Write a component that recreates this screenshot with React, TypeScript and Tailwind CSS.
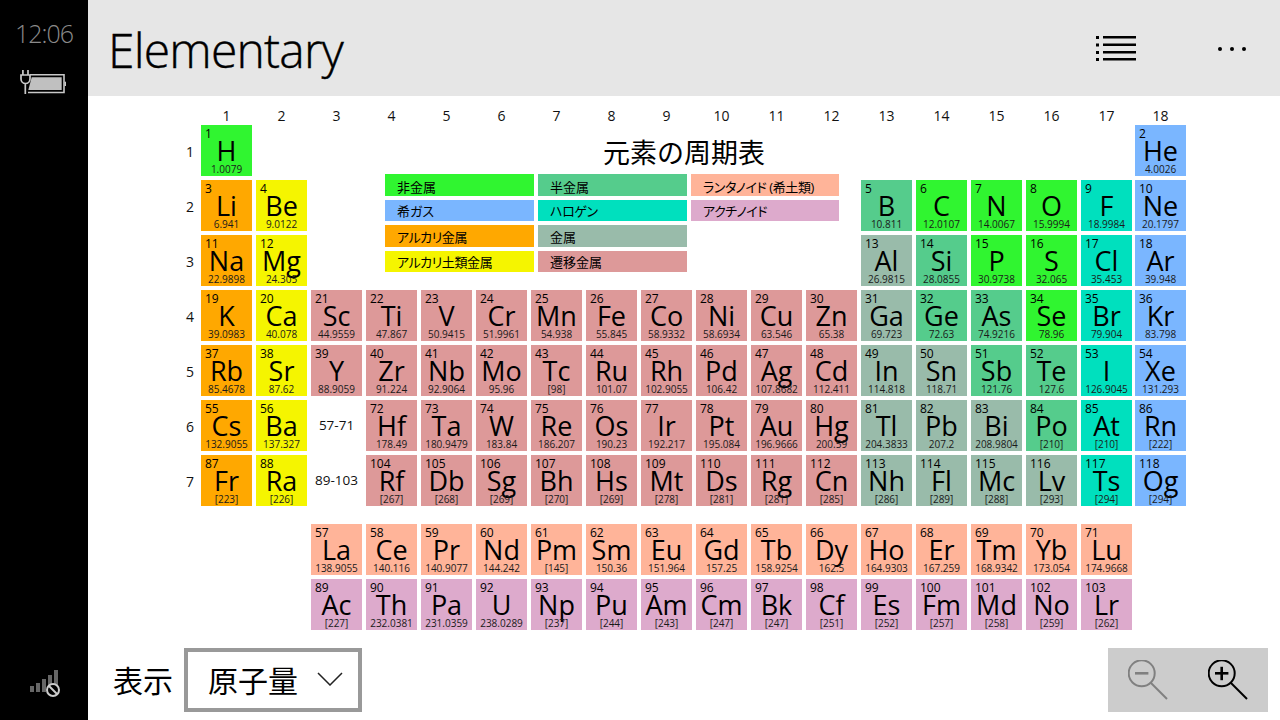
const colors = {
  nonmetal: 'bg-[#30f530]',
  noble: 'bg-[#7ab6ff]',
  alkali: 'bg-[#ffa800]',
  alkaline: 'bg-[#f5f500]',
  metalloid: 'bg-[#55cc8c]',
  halogen: 'bg-[#00e0be]',
  metal: 'bg-[#99bbaa]',
  transition: 'bg-[#dd9999]',
  lanthanoid: 'bg-[#ffb499]',
  actinoid: 'bg-[#ddaacc]',
};

type Kind = keyof typeof colors;

// number, symbol, weight, column, grid row, kind
type Element = [number, string, string, number, number, Kind];

const elements: Element[] = [
  [1, 'H', '1.0079', 1, 1, 'nonmetal'],
  [2, 'He', '4.0026', 18, 1, 'noble'],
  [3, 'Li', '6.941', 1, 2, 'alkali'],
  [4, 'Be', '9.0122', 2, 2, 'alkaline'],
  [5, 'B', '10.811', 13, 2, 'metalloid'],
  [6, 'C', '12.0107', 14, 2, 'nonmetal'],
  [7, 'N', '14.0067', 15, 2, 'nonmetal'],
  [8, 'O', '15.9994', 16, 2, 'nonmetal'],
  [9, 'F', '18.9984', 17, 2, 'halogen'],
  [10, 'Ne', '20.1797', 18, 2, 'noble'],
  [11, 'Na', '22.9898', 1, 3, 'alkali'],
  [12, 'Mg', '24.305', 2, 3, 'alkaline'],
  [13, 'Al', '26.9815', 13, 3, 'metal'],
  [14, 'Si', '28.0855', 14, 3, 'metalloid'],
  [15, 'P', '30.9738', 15, 3, 'nonmetal'],
  [16, 'S', '32.065', 16, 3, 'nonmetal'],
  [17, 'Cl', '35.453', 17, 3, 'halogen'],
  [18, 'Ar', '39.948', 18, 3, 'noble'],
  [19, 'K', '39.0983', 1, 4, 'alkali'],
  [20, 'Ca', '40.078', 2, 4, 'alkaline'],
  [21, 'Sc', '44.9559', 3, 4, 'transition'],
  [22, 'Ti', '47.867', 4, 4, 'transition'],
  [23, 'V', '50.9415', 5, 4, 'transition'],
  [24, 'Cr', '51.9961', 6, 4, 'transition'],
  [25, 'Mn', '54.938', 7, 4, 'transition'],
  [26, 'Fe', '55.845', 8, 4, 'transition'],
  [27, 'Co', '58.9332', 9, 4, 'transition'],
  [28, 'Ni', '58.6934', 10, 4, 'transition'],
  [29, 'Cu', '63.546', 11, 4, 'transition'],
  [30, 'Zn', '65.38', 12, 4, 'transition'],
  [31, 'Ga', '69.723', 13, 4, 'metal'],
  [32, 'Ge', '72.63', 14, 4, 'metalloid'],
  [33, 'As', '74.9216', 15, 4, 'metalloid'],
  [34, 'Se', '78.96', 16, 4, 'nonmetal'],
  [35, 'Br', '79.904', 17, 4, 'halogen'],
  [36, 'Kr', '83.798', 18, 4, 'noble'],
  [37, 'Rb', '85.4678', 1, 5, 'alkali'],
  [38, 'Sr', '87.62', 2, 5, 'alkaline'],
  [39, 'Y', '88.9059', 3, 5, 'transition'],
  [40, 'Zr', '91.224', 4, 5, 'transition'],
  [41, 'Nb', '92.9064', 5, 5, 'transition'],
  [42, 'Mo', '95.96', 6, 5, 'transition'],
  [43, 'Tc', '[98]', 7, 5, 'transition'],
  [44, 'Ru', '101.07', 8, 5, 'transition'],
  [45, 'Rh', '102.9055', 9, 5, 'transition'],
  [46, 'Pd', '106.42', 10, 5, 'transition'],
  [47, 'Ag', '107.8682', 11, 5, 'transition'],
  [48, 'Cd', '112.411', 12, 5, 'transition'],
  [49, 'In', '114.818', 13, 5, 'metal'],
  [50, 'Sn', '118.71', 14, 5, 'metal'],
  [51, 'Sb', '121.76', 15, 5, 'metalloid'],
  [52, 'Te', '127.6', 16, 5, 'metalloid'],
  [53, 'I', '126.9045', 17, 5, 'halogen'],
  [54, 'Xe', '131.293', 18, 5, 'noble'],
  [55, 'Cs', '132.9055', 1, 6, 'alkali'],
  [56, 'Ba', '137.327', 2, 6, 'alkaline'],
  [72, 'Hf', '178.49', 4, 6, 'transition'],
  [73, 'Ta', '180.9479', 5, 6, 'transition'],
  [74, 'W', '183.84', 6, 6, 'transition'],
  [75, 'Re', '186.207', 7, 6, 'transition'],
  [76, 'Os', '190.23', 8, 6, 'transition'],
  [77, 'Ir', '192.217', 9, 6, 'transition'],
  [78, 'Pt', '195.084', 10, 6, 'transition'],
  [79, 'Au', '196.9666', 11, 6, 'transition'],
  [80, 'Hg', '200.59', 12, 6, 'transition'],
  [81, 'Tl', '204.3833', 13, 6, 'metal'],
  [82, 'Pb', '207.2', 14, 6, 'metal'],
  [83, 'Bi', '208.9804', 15, 6, 'metal'],
  [84, 'Po', '[210]', 16, 6, 'metalloid'],
  [85, 'At', '[210]', 17, 6, 'halogen'],
  [86, 'Rn', '[222]', 18, 6, 'noble'],
  [87, 'Fr', '[223]', 1, 7, 'alkali'],
  [88, 'Ra', '[226]', 2, 7, 'alkaline'],
  [104, 'Rf', '[267]', 4, 7, 'transition'],
  [105, 'Db', '[268]', 5, 7, 'transition'],
  [106, 'Sg', '[269]', 6, 7, 'transition'],
  [107, 'Bh', '[270]', 7, 7, 'transition'],
  [108, 'Hs', '[269]', 8, 7, 'transition'],
  [109, 'Mt', '[278]', 9, 7, 'transition'],
  [110, 'Ds', '[281]', 10, 7, 'transition'],
  [111, 'Rg', '[281]', 11, 7, 'transition'],
  [112, 'Cn', '[285]', 12, 7, 'transition'],
  [113, 'Nh', '[286]', 13, 7, 'metal'],
  [114, 'Fl', '[289]', 14, 7, 'metal'],
  [115, 'Mc', '[288]', 15, 7, 'metal'],
  [116, 'Lv', '[293]', 16, 7, 'metal'],
  [117, 'Ts', '[294]', 17, 7, 'halogen'],
  [118, 'Og', '[294]', 18, 7, 'noble'],
  [57, 'La', '138.9055', 3, 9, 'lanthanoid'],
  [58, 'Ce', '140.116', 4, 9, 'lanthanoid'],
  [59, 'Pr', '140.9077', 5, 9, 'lanthanoid'],
  [60, 'Nd', '144.242', 6, 9, 'lanthanoid'],
  [61, 'Pm', '[145]', 7, 9, 'lanthanoid'],
  [62, 'Sm', '150.36', 8, 9, 'lanthanoid'],
  [63, 'Eu', '151.964', 9, 9, 'lanthanoid'],
  [64, 'Gd', '157.25', 10, 9, 'lanthanoid'],
  [65, 'Tb', '158.9254', 11, 9, 'lanthanoid'],
  [66, 'Dy', '162.5', 12, 9, 'lanthanoid'],
  [67, 'Ho', '164.9303', 13, 9, 'lanthanoid'],
  [68, 'Er', '167.259', 14, 9, 'lanthanoid'],
  [69, 'Tm', '168.9342', 15, 9, 'lanthanoid'],
  [70, 'Yb', '173.054', 16, 9, 'lanthanoid'],
  [71, 'Lu', '174.9668', 17, 9, 'lanthanoid'],
  [89, 'Ac', '[227]', 3, 10, 'actinoid'],
  [90, 'Th', '232.0381', 4, 10, 'actinoid'],
  [91, 'Pa', '231.0359', 5, 10, 'actinoid'],
  [92, 'U', '238.0289', 6, 10, 'actinoid'],
  [93, 'Np', '[237]', 7, 10, 'actinoid'],
  [94, 'Pu', '[244]', 8, 10, 'actinoid'],
  [95, 'Am', '[243]', 9, 10, 'actinoid'],
  [96, 'Cm', '[247]', 10, 10, 'actinoid'],
  [97, 'Bk', '[247]', 11, 10, 'actinoid'],
  [98, 'Cf', '[251]', 12, 10, 'actinoid'],
  [99, 'Es', '[252]', 13, 10, 'actinoid'],
  [100, 'Fm', '[257]', 14, 10, 'actinoid'],
  [101, 'Md', '[258]', 15, 10, 'actinoid'],
  [102, 'No', '[259]', 16, 10, 'actinoid'],
  [103, 'Lr', '[262]', 17, 10, 'actinoid'],
];

const legend: [string, Kind, string][] = [
  ['非金属', 'nonmetal', 'h-[22px] leading-[26px]'],
  ['半金属', 'metalloid', 'h-[22px] leading-[26px]'],
  ['ランタノイド (希土類)', 'lanthanoid', 'h-[22px] leading-[26px] tracking-[-0.4px]'],
  ['希ガス', 'noble', 'h-[21px] leading-[22px]'],
  ['ハロゲン', 'halogen', 'h-[21px] leading-[22px] tracking-[-0.4px]'],
  ['アクチノイド', 'actinoid', 'h-[21px] leading-[22px] tracking-[-0.4px]'],
  ['アルカリ金属', 'alkali', 'h-[22px] leading-[24px] tracking-[-0.4px]'],
  ['金属', 'metal', 'h-[22px] leading-[24px]'],
  ['', 'metal', 'h-[22px] invisible'],
  ['アルカリ土類金属', 'alkaline', 'h-[21px] leading-[22px] tracking-[-0.4px]'],
  ['遷移金属', 'transition', 'h-[21px] leading-[22px]'],
];

function Cell({ el }: { el: Element }) {
  const [num, symbol, weight, col, row, kind] = el;
  return (
    <div
      className={`${colors[kind]} ${col === 18 ? '-ml-px' : ''} flex h-[51px] w-[51px] flex-col overflow-hidden text-black`}
      style={{ gridColumn: col + 1, gridRow: row + 1 }}
    >
      <div className="h-[14px] pt-[2px] pl-[4px] text-[12px] leading-[13px]">{num}</div>
      <div className="h-[24px] text-center text-[27px] leading-[24px]">{symbol}</div>
      <div className="text-center text-[10px] leading-[12px] text-[#1a1a1a]">{weight}</div>
    </div>
  );
}

function Battery() {
  return (
    <svg width="46" height="24" viewBox="0 0 46 24" className="ml-[20px] mt-[21px]">
      <path d="M10 4.7h34v17.8H8" fill="none" stroke="#c8c8c8" strokeWidth="1.6" />
      <path d="M11.7 7.3h30V20H8.3z" fill="#c0c0c0" />
      <rect x="44.5" y="11.7" width="1.5" height="4.3" fill="#c8c8c8" />
      <path d="M1 5h9v4a4.5 4.5 0 0 1-9 0zM2.9 0v5M8 0v5M5.3 13v11" fill="none" stroke="#c8c8c8" strokeWidth="1.7" />
    </svg>
  );
}

function Signal() {
  return (
    <svg width="32" height="28" viewBox="0 0 32 28" className="mb-[22px] ml-[29px]">
      <rect x="1" y="16" width="4" height="6" fill="#666" />
      <rect x="7" y="13" width="4" height="9" fill="#666" />
      <rect x="13" y="9" width="4" height="13" fill="#666" />
      <rect x="19" y="5" width="4" height="17" fill="#666" />
      <rect x="25" y="0" width="4" height="22" fill="#666" />
      <circle cx="24" cy="20" r="6" fill="#000" stroke="#ccc" strokeWidth="2" />
      <path d="M20 16l8 8" stroke="#ccc" strokeWidth="2" />
    </svg>
  );
}

function ListIcon() {
  return (
    <svg width="40" height="26" viewBox="0 0 40 26" fill="#000">
      <rect x="0" y="1" width="3" height="3" />
      <rect x="7" y="1" width="33" height="2.5" />
      <rect x="0" y="8.5" width="3" height="3" />
      <rect x="7" y="8.5" width="33" height="2.5" />
      <rect x="0" y="16" width="3" height="3" />
      <rect x="7" y="16" width="33" height="2.5" />
      <rect x="0" y="23" width="3" height="3" />
      <rect x="7" y="23" width="33" height="2.5" />
    </svg>
  );
}

function ZoomIcon({ plus, color }: { plus?: boolean; color: string }) {
  return (
    <svg width="40" height="40" viewBox="0 0 40 40" fill="none" stroke={color} strokeWidth="2">
      <circle cx="13.7" cy="13.3" r="13" />
      <path d="M23 23l16 16" />
      <path d="M7 13.3h13.4" strokeWidth="2.6" />
      {plus && <path d="M13.7 6.8v13.4" strokeWidth="2.6" />}
    </svg>
  );
}

export default function App() {
  return (
    <div className="flex h-[720px] w-[1280px] overflow-hidden bg-white font-['Open_Sans','Noto_Sans_CJK_JP',sans-serif] text-black">
      {/* status bar */}
      <div className="flex w-[88px] shrink-0 flex-col bg-black">
        <div className="mt-[17px] text-center text-[25px] font-light leading-[32px] tracking-[-1px] text-[#8a8a8a]">12:06</div>
        <Battery />
        <div className="flex-1" />
        <Signal />
      </div>

      <div className="flex min-w-0 flex-1 flex-col">
        <div className="flex h-24 shrink-0 items-center bg-[#e6e6e6] pl-5 pr-[32px]">
          <div className="pt-1 text-[48px] font-light leading-[92px] tracking-[-0.8px] [-webkit-text-stroke:0.4px_#000]">Elementary</div>
          <div className="ml-auto flex items-center gap-[82px]">
            <ListIcon />
            <div className="mt-[2px] flex gap-[8px] pr-[2px]">
              <div className="h-1 w-1 rounded-full bg-black" />
              <div className="h-1 w-1 rounded-full bg-black" />
              <div className="h-1 w-1 rounded-full bg-black" />
            </div>
          </div>
        </div>

        {/* periodic table */}
        <div className="ml-[89px] mt-3 grid grid-cols-[20px_repeat(18,51px)] grid-rows-[13px_repeat(7,51px)_10px_repeat(2,51px)] gap-1">
          {Array.from({ length: 18 }, (_, i) => (
            <div
              key={i}
              className={`${i === 17 ? '-ml-0.5' : ''} text-center text-[14px] leading-[16px] text-[#111]`}
              style={{ gridColumn: i + 2, gridRow: 1 }}
            >
              {i + 1}
            </div>
          ))}
          {Array.from({ length: 7 }, (_, i) => (
            <div
              key={i}
              className="flex items-center justify-center pl-[6px] pt-[2px] text-[14px] text-[#111]"
              style={{ gridColumn: 1, gridRow: i + 2 }}
            >
              {i + 1}
            </div>
          ))}
          {elements.map((el) => (
            <Cell key={el[0]} el={el} />
          ))}
          <div className="col-start-4 row-start-7 flex items-center justify-center text-[13.5px] text-[#111]">57-71</div>
          <div className="col-start-4 row-start-8 flex items-center justify-center text-[13.5px] text-[#111]">89-103</div>

          <div className="col-start-5 col-end-14 row-start-2 row-end-5 pl-[19px]">
            <div className="h-[49px] pl-[126px] pt-[9px] text-center text-[27px] leading-[38px]">元素の周期表</div>
            <div className="grid grid-cols-[149px_149px_148px] gap-x-1 gap-y-1 [font-feature-settings:'palt']">
              {legend.map(([label, kind, size], i) => (
                <div key={i} className={`${colors[kind]} ${size} pl-3 text-[13px]`}>
                  {label}
                </div>
              ))}
            </div>
          </div>
        </div>

        {/* bottom bar */}
        <div className="mb-2 mt-auto flex h-16 items-center pl-[25px] pr-3">
          <span className="mr-[11px] text-[30px]">表示</span>
          <div className="flex h-16 w-[178px] items-center border-4 border-[#999] bg-white pl-5">
            <span className="text-[30px]">原子量</span>
            <svg width="26" height="14" viewBox="0 0 26 14" fill="none" stroke="#222" strokeWidth="1.5" className="ml-[19px] -mt-[2px]">
              <path d="M1 1l12 12L25 1" />
            </svg>
          </div>
          <div className="ml-auto flex h-16 w-40 bg-[#cccccc]">
            <div className="flex w-20 items-center pl-5">
              <ZoomIcon color="#808080" />
            </div>
            <div className="flex w-20 items-center pl-5">
              <ZoomIcon plus color="#000" />
            </div>
          </div>
        </div>
      </div>
    </div>
  );
}
